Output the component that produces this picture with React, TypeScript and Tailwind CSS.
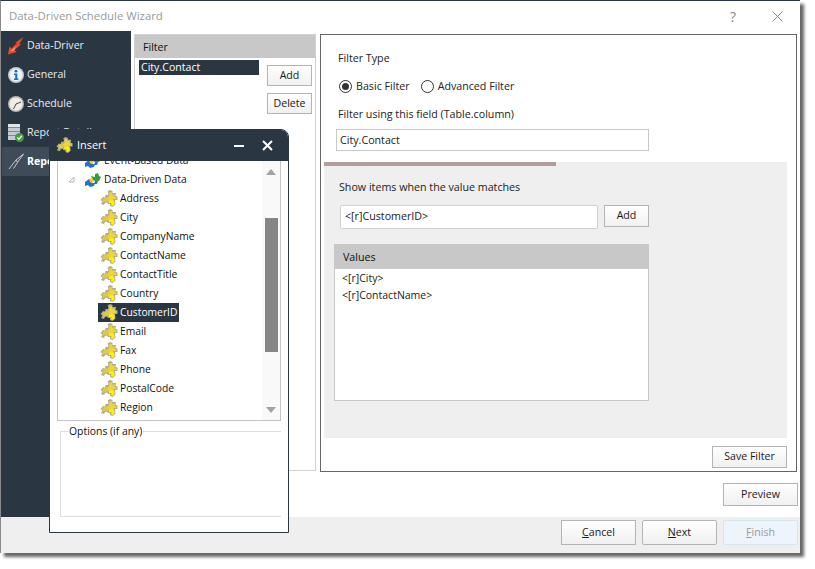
import React from "react";

function Puzzle({ size = 18 }: { size?: number }) {
  return (
    <svg width={size} height={size} viewBox="0 0 18 18" className="shrink-0">
      <path d="M0.5 10 L3 7 L5 7.5 L5.5 5 L8 5 L8.5 3 L7.5 1.5 L10 0 L12.5 1 L12.5 3 L16 3 L15.5 6 L17.5 6.5 L17.5 10 L15 10 L15.5 14.5 L12.5 17 L10 16 L10 14 L8 14 L7 12.5 L5 13 L4 15 L1 14 L2.5 11.5 Z" fill="#b3ad8a" />
      <path d="M7 8 L9 6 L9.5 2.5 L12 2 L12 4.5 L15 4.5 L14.5 7 L16.5 7.5 L16.5 9 L13.5 9 L12 11 L8.5 11 Z" fill="#ecd43e" />
      <path d="M2.5 9 L6 7 L8.5 8.5 L8 11.5 L4.5 12 L3 13 Z" fill="#dcc84a" />
      <path d="M8.5 11 L13 9.5 L14.5 12 L14.5 14.5 L12.5 16 L11 15 L11.5 13 L9 13 Z" fill="#fff000" />
    </svg>
  );
}

function BluePuzzle() {
  return (
    <svg width="18" height="16" viewBox="0 0 18 16" className="shrink-0">
      <path d="M1 10 L5 7 L8 8 L8 11 L11 11 L10 14 L6 15 L4 13 L1 14 Z" fill="#2a6fc9" />
      <path d="M7 4 L11 5 L11 2 L14 1 L15 4 L17 5 L15 9 L11 9 L9 8 Z" fill="#3a9a3c" />
      <path d="M5 7 L8 6 L10 9 L8 11 L6 10 Z" fill="#f0d020" />
      <path d="M11 9 L14 9 L13 12 L10 12 Z" fill="#2a6fc9" />
    </svg>
  );
}

function SideIcon({ kind }: { kind: string }) {
  if (kind === "driver")
    return (
      <svg width="18" height="18" viewBox="0 0 18 18" className="shrink-0">
        <path d="M16.5 0 L12 7.5 L14.5 7 L7.5 13 L9.5 15 L1 17.5 L2.5 9.5 L4.5 11.5 L10 6 L8 6 Z" fill="#ef4a26" />
        <path d="M3.5 14 L9 9.5 L6.5 14 Z" fill="#ffa07a" />
      </svg>
    );
  if (kind === "info")
    return (
      <svg width="18" height="18" viewBox="0 0 18 18" className="shrink-0">
        <circle cx="9" cy="9" r="8" fill="#c4ccd3" />
        <circle cx="9" cy="9" r="6.4" fill="#eef2f5" />
        <circle cx="9" cy="5.2" r="1.4" fill="#1f6fb0" />
        <path d="M7 7.5 H10.3 V12.5 H11.4 V14 H7 V12.5 H8.2 V9 H7 Z" fill="#1f6fb0" />
      </svg>
    );
  if (kind === "clock")
    return (
      <svg width="18" height="18" viewBox="0 0 18 18" className="shrink-0">
        <circle cx="9" cy="9" r="8" fill="#b4b4ae" />
        <circle cx="9" cy="9" r="6.6" fill="#efede6" />
        <path d="M9 9 L14 7 M9 9 L6.5 14" stroke="#444" strokeWidth="1" fill="none" />
      </svg>
    );
  if (kind === "db")
    return (
      <svg width="18" height="20" viewBox="0 0 18 20" className="shrink-0">
        <path d="M1 1 H13 V17 H1 Z" fill="#c7ccd2" />
        <path d="M1 4.5 H13 M1 8.5 H13 M1 12.5 H13" stroke="#7f8a96" strokeWidth="1" />
        <rect x="1" y="1" width="12" height="3" fill="#e1e4e8" />
        <circle cx="12.5" cy="14.5" r="4.5" fill="#3f9e3a" />
        <path d="M10.3 14.5 L12 16.3 L14.8 12.8" stroke="#fff" strokeWidth="1.4" fill="none" />
      </svg>
    );
  return (
    <svg width="18" height="18" viewBox="0 0 18 18" className="shrink-0">
      <path d="M16.5 1 L9 7 L2 16 M16.5 1 L10.5 9.5 L6.5 15.5 M9 7 L10.5 9.5" stroke="#c8ccd0" strokeWidth="1" fill="none" />
    </svg>
  );
}

function Btn({ children, className = "" }: { children: React.ReactNode; className?: string }) {
  return (
    <button className={`flex items-center justify-center border border-[#b4b4b4] bg-gradient-to-b from-white to-[#f0f0f0] text-[10.6px] text-[#1a1a1a] ${className}`}>
      {children}
    </button>
  );
}

function NavItem({ kind, label, active }: { kind: string; label: string; active?: boolean }) {
  return (
    <div className={`ml-[1px] flex h-[29px] items-center gap-[2px] pl-[5px] text-[10.6px] ${active ? "bg-[#3f4b59] font-bold text-white" : "text-[#e8edf1]"}`}>
      <SideIcon kind={kind} />
      <span>{label}</span>
    </div>
  );
}

const fields = ["Address", "City", "CompanyName", "ContactName", "ContactTitle", "Country", "CustomerID", "Email", "Fax", "Phone", "PostalCode", "Region"];

function InsertDialog() {
  return (
    <div className="absolute left-[49px] top-[129px] flex h-[404px] w-[240px] flex-col rounded-tr-[8px] border border-[#2b3643] bg-white">
      <div className="flex h-[31px] shrink-0 items-center rounded-tr-[7px] bg-[#2b3643] pl-[6px] pr-[15px] text-[10.9px] text-white">
        <Puzzle size={17} />
        <span className="ml-[4px] flex-1">Insert</span>
        <svg width="10" height="10" viewBox="0 0 10 10" className="mr-[18px]"><rect x="0" y="4" width="10" height="2" fill="#fff" /></svg>
        <svg width="11" height="11" viewBox="0 0 11 11"><path d="M1 1 L10 10 M10 1 L1 10" stroke="#fff" strokeWidth="2" /></svg>
      </div>
      <div className="ml-[7px] flex h-[260px] w-[224px] shrink-0 border border-t-0 border-[#c4c4c4]">
        <div className="flex-1 overflow-hidden">
          <div className="-mt-[10px] flex h-[19px] items-center pl-[26px] text-[10.3px] text-[#111]">
            <BluePuzzle />
            <span className="ml-[2px]">Event-Based Data</span>
          </div>
          <div className="flex h-[19px] items-center pl-[10px] text-[10.3px] text-[#111]">
            <svg width="7" height="7" viewBox="0 0 7 7" className="mr-[9px]"><path d="M6 1 V6 H1 Z" fill="none" stroke="#b5b5b5" /></svg>
            <BluePuzzle />
            <span className="ml-[2px]">Data-Driven Data</span>
          </div>
          <div className="flex flex-col">
            {fields.map((f) => (
              <div key={f} className="flex h-[19px] items-center pl-[40px]">
                <div className={`flex h-[19px] items-center pr-[2px] text-[10.3px] ${f === "CustomerID" ? "bg-[#2b3643] text-white" : "text-[#111]"}`}>
                  <span className="ml-[2px]"><Puzzle size={18} /></span>
                  <span className="ml-[2px]">{f}</span>
                </div>
              </div>
            ))}
          </div>
        </div>
        <div className="flex w-[18px] shrink-0 flex-col items-center bg-[#f9f9f9]">
          <svg width="10" height="6" viewBox="0 0 10 6" className="mt-[8px]"><path d="M5 0 L10 6 H0 Z" fill="#a3a3a3" /></svg>
          <div className="mt-[43px] h-[134px] w-[13px] bg-[#868686]" />
          <div className="flex-1" />
          <svg width="10" height="6" viewBox="0 0 10 6" className="mb-[7px]"><path d="M5 6 L10 0 H0 Z" fill="#a3a3a3" /></svg>
        </div>
      </div>
      <div className="relative ml-[10px] mt-[10px] h-[86px] w-[221px] border border-r-0 border-[#dcdcdc]">
        <span className="absolute -top-[9px] left-[7px] bg-white px-[1px] text-[10.4px] leading-[16px] text-[#111]">Options (if any)</span>
      </div>
    </div>
  );
}

export default function App() {
  return (
    <div className="relative h-[569px] w-[815px] overflow-hidden bg-white font-['Open_Sans','Noto_Sans',sans-serif]">
      <div className="flex h-[553px] w-[800px] flex-col border-l border-t border-l-[#8a8a8a] border-t-[#2b3643] bg-white shadow-[4px_4px_3px_rgba(0,0,0,0.6)]">
        <div className="flex h-[30px] shrink-0 items-center pl-[8px] pr-[17px] text-[11.35px] text-[#9a9a9a]">
          <span className="flex-1">Data-Driven Schedule Wizard</span>
          <span className="mr-[36px] text-[14px] text-[#888]">?</span>
          <svg width="11" height="11" viewBox="0 0 11 11"><path d="M0.5 0.5 L10.5 10.5 M10.5 0.5 L0.5 10.5" stroke="#888" strokeWidth="1" /></svg>
        </div>
        <div className="flex min-h-0 flex-1">
          <div className="w-[130px] shrink-0 bg-[#2b3643]">
            <NavItem kind="driver" label="Data-Driver" />
            <NavItem kind="info" label="General" />
            <NavItem kind="clock" label="Schedule" />
            <NavItem kind="db" label="Report Details" />
            <NavItem kind="comp" label="Report Filter" active />
          </div>
          <div className="flex flex-1 flex-col">
            <div className="flex flex-1 gap-[4px] pl-[3px] pt-[3px]">
              <div className="flex h-[437px] w-[182px] flex-col border border-[#d2d2d2]">
                <div className="flex h-[23px] shrink-0 items-center bg-[#c8c8c8] pl-[8px] pt-[2px] text-[10.6px] text-[#111]">Filter</div>
                <div className="flex">
                  <div className="ml-[4px] mt-[2px] flex h-[15px] w-[120px] items-center bg-[#2b3643] pl-[2px] pt-[1px] text-[10.6px] text-white">City.Contact</div>
                  <div className="ml-[8px] mt-[7px] flex flex-col gap-[7px]">
                    <Btn className="h-[21px] w-[45px]">Add</Btn>
                    <Btn className="h-[21px] w-[45px]">Delete</Btn>
                  </div>
                </div>
              </div>
              <div className="flex h-[438px] w-[477px] flex-col border border-[#666] bg-white">
                <div className="pl-[17px] pt-[15px] text-[10.7px] leading-[16px] text-[#222]">Filter Type</div>
                <div className="mt-[12px] flex items-center pl-[18px] text-[10.7px] leading-[16px] text-[#222]">
                  <span className="flex h-[13px] w-[13px] items-center justify-center rounded-full border border-[#333]"><span className="h-[7px] w-[7px] rounded-full bg-[#333]" /></span>
                  <span className="ml-[4px]">Basic Filter</span>
                  <span className="ml-[11px] h-[13px] w-[13px] rounded-full border border-[#333]" />
                  <span className="ml-[4px]">Advanced Filter</span>
                </div>
                <div className="mt-[12px] pl-[17px] text-[10.7px] leading-[16px] text-[#222]">Filter using this field (Table.column)</div>
                <div className="ml-[15px] mt-[7px] flex h-[22px] w-[313px] items-center border border-[#c8c8c8] pl-[3px] text-[10.7px] text-[#222]">City.Contact</div>
                <div className="ml-[3px] mt-[11px] flex h-[276px] w-[463px] flex-col bg-[#efefef]">
                  <div className="h-[4px] w-[232px] bg-[#b39d9a]" />
                  <div className="pl-[15px] pt-[13px] text-[10.7px] leading-[16px] text-[#222]">Show items when the value matches</div>
                  <div className="ml-[16px] mt-[10px] flex gap-[6px]">
                    <div className="flex h-[24px] w-[258px] items-center rounded-[2px] border border-[#d0d0d0] bg-white pb-[1px] pl-[4px] text-[10.7px] text-[#222]">{"<[r]CustomerID>"}</div>
                    <Btn className="h-[22px] w-[45px]">Add</Btn>
                  </div>
                  <div className="ml-[10px] mt-[15px] flex h-[157px] w-[315px] flex-col border border-t-0 border-[#c8c8c8] bg-white">
                    <div className="flex h-[25px] shrink-0 items-center bg-[#c8c8c8] pl-[8px] pt-[1px] text-[10.7px] text-[#111]">Values</div>
                    <div className="pl-[7px] pt-[1px] text-[10.5px] leading-[17px] text-[#222]">
                      <div>{"<[r]City>"}</div>
                      <div>{"<[r]ContactName>"}</div>
                    </div>
                  </div>
                </div>
                <div className="mr-[9px] mt-[8px] flex justify-end">
                  <Btn className="h-[22px] w-[75px]">Save Filter</Btn>
                </div>
              </div>
            </div>
            <div className="flex h-[44px] items-center justify-end pr-[2px]">
              <Btn className="mt-[-1px] h-[23px] w-[75px]">Preview</Btn>
            </div>
          </div>
        </div>
        <div className="flex h-[36px] shrink-0 items-start justify-end gap-[6px] bg-[#efefef] pr-[2px] pt-[3px]">
          <Btn className="h-[25px] w-[75px]"><span><span className="underline">C</span>ancel</span></Btn>
          <Btn className="h-[25px] w-[75px] rounded-[2px]"><span><span className="underline">N</span>ext</span></Btn>
          <button className="flex h-[25px] w-[75px] items-center justify-center rounded-[2px] border border-[#d5e5f2] bg-[#eef4fb] text-[10.6px] text-[#9a9a9a]"><span><span className="underline">F</span>inish</span></button>
        </div>
      </div>
      <InsertDialog />
    </div>
  );
}
